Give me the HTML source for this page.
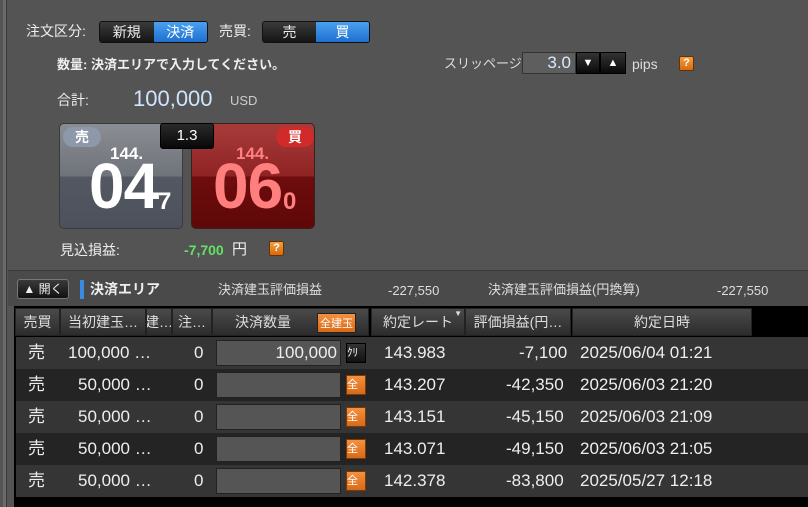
<!DOCTYPE html>
<html><head><meta charset="utf-8"><style>
*{margin:0;padding:0;box-sizing:border-box}
body{width:808px;height:507px;background:#545454;font-family:"Liberation Sans","Noto Sans CJK JP",sans-serif;color:#eee;position:relative;overflow:hidden;font-size:13px}
.a{position:absolute;white-space:nowrap;line-height:1.2}
.seg{position:absolute;display:flex;border:1px solid #111;border-radius:3px;overflow:hidden;height:22px}
.seg div{display:flex;align-items:center;justify-content:center;font-size:14px}
.off{background:linear-gradient(#3a3a3a,#151515);color:#eee}
.on{background:linear-gradient(#4aa0f0,#1f6fd0);color:#fff}
.q{position:absolute;width:15px;height:15px;background:linear-gradient(#f4a040,#d76a10);border:1px solid #6a3000;border-radius:2px;color:#fff;font-weight:bold;font-size:11px;text-align:center;line-height:13px}
.tile{position:absolute;top:123px;width:124px;height:106px;border-radius:5px;overflow:hidden}
.hdr{position:absolute;top:308px;height:28px;background:linear-gradient(#4a4a4a,#2c2c2c);border:1px solid #222;color:#ddd;font-size:14px;display:flex;align-items:center;justify-content:center;overflow:hidden}
.row{position:absolute;left:16px;width:792px;height:32px;font-size:17px;color:#eee}
.row span{position:absolute;top:0;line-height:32px}
.inp{position:absolute;left:200px;top:3px;width:125px;height:26px;background:#555;border:1px solid #222;text-align:right;padding-right:3px;line-height:24px}
.ob{position:absolute;left:330px;top:6px;width:20px;height:20px;background:linear-gradient(#f49040,#d86a18);border:1px solid #7a3a00;color:#fff;font-size:11px;line-height:18px;overflow:hidden}
</style></head><body>
<div class="a" style="left:3px;top:0;width:4px;height:507px;background:#6a6a6a;border-right:1px solid #3a3a3a"></div>

<div class="a" style="left:26px;top:23px;font-size:14px">注文区分:</div>
<div class="seg" style="left:99px;top:21px;width:109px"><div class="off" style="width:54px">新規</div><div class="on" style="width:54px">決済</div></div>
<div class="a" style="left:219px;top:23px;font-size:14px">売買:</div>
<div class="seg" style="left:262px;top:21px;width:108px"><div class="off" style="width:54px">売</div><div class="on" style="width:54px">買</div></div>

<div class="a" style="left:57px;top:57px;font-size:13px;font-weight:bold">数量: 決済エリアで入力してください。</div>
<div class="a" style="left:444px;top:56px;font-size:13px;color:#ddd">スリッページ:</div>
<div class="a" style="left:522px;top:52px;width:54px;height:22px;background:#5e5e5e;border:1px solid #333;text-align:right;padding-right:4px;font-size:17px;color:#d8e8ff;line-height:20px">3.0</div>
<div class="a" style="left:576px;top:52px;width:24px;height:22px;background:linear-gradient(#333,#0a0a0a);border:1px solid #000;color:#fff;text-align:center;font-size:11px;line-height:20px">▼</div>
<div class="a" style="left:600px;top:52px;width:26px;height:22px;background:linear-gradient(#333,#0a0a0a);border:1px solid #000;color:#fff;text-align:center;font-size:11px;line-height:20px">▲</div>
<div class="a" style="left:632px;top:56px;font-size:14px;color:#ddd">pips</div>
<div class="q" style="left:679px;top:56px">?</div>

<div class="a" style="left:57px;top:92px;font-size:14px">合計:</div>
<div class="a" style="left:133px;top:86px;font-size:22px;color:#cfe4ff">100,000</div>
<div class="a" style="left:230px;top:93px;font-size:13px;color:#ccc">USD</div>

<div class="tile" style="left:59px;background:linear-gradient(#8a8d93 0,#6f737a 52px,#535862 53px,#4c505a 106px);border:1px solid #3a3a3a">
 <div class="a" style="left:3px;top:3px;width:38px;height:20px;border-radius:10px;background:#8d98a8;color:#fff;text-align:center;font-size:14px;font-weight:bold;line-height:20px">売</div>
 <div class="a" style="left:50px;top:20px;font-size:17px;font-weight:bold;color:#fff">144.</div>
 <div class="a" style="left:29px;top:30px;font-size:64px;line-height:64px;font-weight:bold;color:#fff;letter-spacing:-1px">04</div>
 <div class="a" style="left:98px;top:64px;font-size:24px;font-weight:bold;color:#fff">7</div>
</div>
<div class="tile" style="left:191px;background:linear-gradient(#a83a3a 0,#8f2424 52px,#6e0c0c 53px,#5e0808 106px);border:1px solid #3a2020">
 <div class="a" style="left:84px;top:3px;width:38px;height:20px;border-radius:10px;background:#d02a2a;color:#fff;text-align:center;font-size:14px;font-weight:bold;line-height:20px">買</div>
 <div class="a" style="left:44px;top:20px;font-size:17px;font-weight:bold;color:#ff8080">144.</div>
 <div class="a" style="left:21px;top:30px;font-size:64px;line-height:64px;font-weight:bold;color:#ff7f7f;letter-spacing:-1px">06</div>
 <div class="a" style="left:91px;top:64px;font-size:24px;font-weight:bold;color:#ff8080">0</div>
</div>
<div class="a" style="left:160px;top:123px;width:54px;height:26px;background:linear-gradient(#2a2a2a,#080808);border:1px solid #000;border-radius:3px;color:#fff;text-align:center;font-size:15px;line-height:24px">1.3</div>

<div class="a" style="left:60px;top:242px;font-size:14px">見込損益:</div>
<div class="a" style="left:184px;top:242px;font-size:14px;color:#66e066;font-weight:bold">-7,700</div>
<div class="a" style="left:232px;top:241px;font-size:15px">円</div>
<div class="q" style="left:269px;top:241px">?</div>

<div class="a" style="left:8px;top:270px;width:800px;height:1px;background:#3a3a3a"></div>
<div class="a" style="left:8px;top:271px;width:800px;height:35px;background:#4a4a4a"></div>
<div class="a" style="left:17px;top:279px;width:52px;height:20px;background:linear-gradient(#3a3a3a,#111);border:1px solid #777;border-radius:3px;font-size:12px;text-align:center;line-height:18px">▲ 開く</div>
<div class="a" style="left:80px;top:280px;width:4px;height:19px;background:#3a8ae0"></div>
<div class="a" style="left:90px;top:281px;font-size:14px;font-weight:bold">決済エリア</div>
<div class="a" style="left:218px;top:282px;font-size:13px;color:#ddd">決済建玉評価損益</div>
<div class="a" style="left:388px;top:283px;font-size:13px;color:#ddd">-227,550</div>
<div class="a" style="left:488px;top:282px;font-size:13px;color:#ddd">決済建玉評価損益(円換算)</div>
<div class="a" style="left:717px;top:283px;font-size:13px;color:#ddd">-227,550</div>

<div class="a" style="left:14px;top:306px;width:794px;height:201px;background:#000"></div>
<div class="hdr" style="left:15px;width:45px">売買</div>
<div class="hdr" style="left:60px;width:86px">当初建玉…</div>
<div class="hdr" style="left:146px;width:26px">建…</div>
<div class="hdr" style="left:172px;width:40px">注…</div>
<div class="hdr" style="left:212px;width:157px;justify-content:flex-start;padding-left:22px">決済数量<span style="position:absolute;left:104px;top:4px;background:linear-gradient(#f49040,#d86a18);border:1px solid #222;color:#fff;font-size:11px;padding:1px 2px">全建玉</span></div>
<div class="hdr" style="left:371px;width:94px">約定レート<span style="position:absolute;right:2px;top:0;font-size:8px">▼</span></div>
<div class="hdr" style="left:465px;width:106px">評価損益(円…</div>
<div class="hdr" style="left:572px;width:180px">約定日時</div>

<div class="row" style="top:337px;background:#353535"><span style="left:12px">売</span><span style="left:52px">100,000 …</span><span style="left:178px">0</span><div class="inp">100,000</div><div class="ob" style="background:linear-gradient(#333,#111);border-color:#000"> ｸﾘ</div><span style="left:368px">143.983</span><span style="left:503px">-7,100</span><span style="left:564px">2025/06/04 01:21</span></div>
<div class="row" style="top:369px;background:#242424"><span style="left:12px">売</span><span style="left:62px">50,000 …</span><span style="left:178px">0</span><div class="inp"></div><div class="ob">全建</div><span style="left:368px">143.207</span><span style="left:490px">-42,350</span><span style="left:564px">2025/06/03 21:20</span></div>
<div class="row" style="top:401px;background:#353535"><span style="left:12px">売</span><span style="left:62px">50,000 …</span><span style="left:178px">0</span><div class="inp"></div><div class="ob">全建</div><span style="left:368px">143.151</span><span style="left:490px">-45,150</span><span style="left:564px">2025/06/03 21:09</span></div>
<div class="row" style="top:433px;background:#242424"><span style="left:12px">売</span><span style="left:62px">50,000 …</span><span style="left:178px">0</span><div class="inp"></div><div class="ob">全建</div><span style="left:368px">143.071</span><span style="left:490px">-49,150</span><span style="left:564px">2025/06/03 21:05</span></div>
<div class="row" style="top:465px;background:#353535"><span style="left:12px">売</span><span style="left:62px">50,000 …</span><span style="left:178px">0</span><div class="inp"></div><div class="ob">全建</div><span style="left:368px">142.378</span><span style="left:490px">-83,800</span><span style="left:564px">2025/05/27 12:18</span></div>
</body></html>
